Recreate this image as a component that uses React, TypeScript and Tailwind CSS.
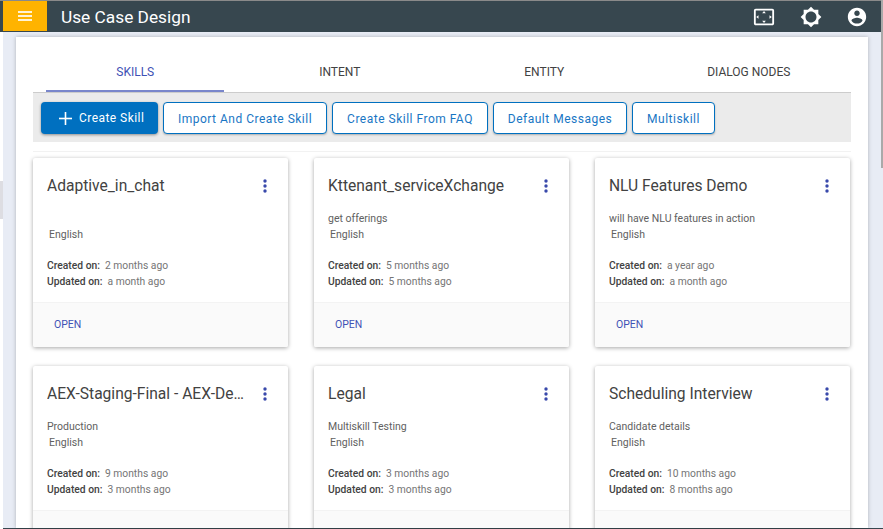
const skills = [
  { title: "Adaptive_in_chat", desc: "", created: "2 months ago", updated: "a month ago" },
  { title: "Kttenant_serviceXchange", desc: "get offerings", created: "5 months ago", updated: "5 months ago" },
  { title: "NLU Features Demo", desc: "will have NLU features in action", created: "a year ago", updated: "a month ago" },
  { title: "AEX-Staging-Final - AEX-Demo-Bot", desc: "Production", created: "9 months ago", updated: "3 months ago" },
  { title: "Legal", desc: "Multiskill Testing", created: "3 months ago", updated: "3 months ago" },
  { title: "Scheduling Interview", desc: "Candidate details", created: "10 months ago", updated: "8 months ago" },
];

const tabs = ["SKILLS", "INTENT", "ENTITY", "DIALOG NODES"];
const actions = [
  { label: "Import And Create Skill", w: "w-[164px]" },
  { label: "Create Skill From FAQ", w: "w-[156px]" },
  { label: "Default Messages", w: "w-[134px]" },
  { label: "Multiskill", w: "w-[83px]" },
];

function Icon({ d, className }: { d: string; className?: string }) {
  return (
    <svg viewBox="0 0 24 24" fill="currentColor" className={className}>
      <path d={d} />
    </svg>
  );
}

function Card({ s }: { s: (typeof skills)[number] }) {
  return (
    <div className="flex h-[189px] w-[255px] shrink-0 flex-col rounded-[2px] bg-white shadow-[0_1px_4px_rgba(0,0,0,0.35)]">
      <div className="flex-1 pl-[14px] pr-[14px]">
        <div className="flex h-[53px] items-center justify-between pt-[3px]">
          <div className="w-[198px] truncate text-[15.6px] leading-[20px] text-[#424242]">{s.title}</div>
          <svg viewBox="0 0 4 14" className="mr-[7px] h-[14px] w-[4px] fill-[#3949ab]">
            <circle cx="2" cy="2" r="1.7" />
            <circle cx="2" cy="7" r="1.7" />
            <circle cx="2" cy="12" r="1.7" />
          </svg>
        </div>
        <div className="h-[16px] text-[10.5px] leading-[16px] text-[#616161]">{s.desc}</div>
        <div className="h-[16px] pl-[2px] text-[10.5px] leading-[16px] text-[#616161]">English</div>
        <div className="mt-[15px] text-[10.3px] leading-[16px] text-[#757575]">
          <div><span className="mr-[5px] font-medium text-[#424242]">Created on:</span>{s.created}</div>
          <div><span className="mr-[5px] font-medium text-[#424242]">Updated on:</span>{s.updated}</div>
        </div>
      </div>
      <div className="flex h-[45px] items-center rounded-b-[2px] border-t border-[#f3f3f3] bg-[#fafafa] pl-[21px] text-[10.5px] text-[#3f51b5]">
        OPEN
      </div>
    </div>
  );
}

export default function App() {
  return (
    <div className="relative flex h-[529px] w-[883px] flex-col overflow-hidden bg-[#e8ecf5] font-['Roboto',sans-serif]">
      <div className="h-px shrink-0 bg-[#8a8a8a]" />
      <header className="flex h-[31px] shrink-0 items-center bg-[#37474f] pl-[3px] text-white">
        <button className="flex h-[30px] w-[44px] items-center justify-center self-start bg-[#ffb300]">
          <svg viewBox="0 0 14 10" className="h-[10px] w-[14px] fill-[#fff3d6]">
            <rect y="0" width="14" height="2" />
            <rect y="4" width="14" height="2" />
            <rect y="8" width="14" height="2" />
          </svg>
        </button>
        <div className="ml-[14px] pt-px text-[17.3px] leading-[22px]">Use Case Design</div>
        <div className="ml-auto mr-[15px] flex items-center gap-[24.5px]">
          <Icon className="h-[22px] w-[22px]" d="M12.01 5.5L10 8h4l-1.99-2.5zM18 10v4l2.5-1.99L18 10zM6 10l-2.5 2.01L6 14v-4zm8 6h-4l2.01 2.5L14 16zm7-13H3c-1.1 0-2 .9-2 2v14c0 1.1.9 2 2 2h18c1.1 0 2-.9 2-2V5c0-1.1-.9-2-2-2zm0 16.01H3V4.99h18v14.02z" />
          <Icon className="h-[22px] w-[22px]" d="M20 8.69V4h-4.69L12 .69 8.69 4H4v4.69L.69 12 4 15.31V20h4.69L12 23.31 15.31 20H20v-4.69L23.31 12 20 8.69zM12 18c-3.31 0-6-2.69-6-6s2.69-6 6-6 6 2.69 6 6-2.69 6-6 6z" />
          <Icon className="h-[22px] w-[22px]" d="M12 2C6.48 2 2 6.48 2 12s4.48 10 10 10 10-4.48 10-10S17.52 2 12 2zm0 3c1.66 0 3 1.34 3 3s-1.34 3-3 3-3-1.34-3-3 1.34-3 3-3zm0 14.2c-2.5 0-4.71-1.28-6-3.22.03-1.99 4-3.08 6-3.08 1.99 0 5.97 1.09 6 3.08-1.29 1.94-3.5 3.22-6 3.22z" />
        </div>
      </header>
      <div className="flex min-h-0 flex-1 border-b border-[#37474f] pl-[3px] pt-[5px]">
        <main className="ml-[13px] w-[852px] overflow-hidden bg-white px-[17px] shadow-[0_0_4px_rgba(0,0,0,0.25)]">
          <nav className="flex h-[56px] border-b border-[#cccccc]">
            {tabs.map((t, i) => (
              <div key={t} className={`relative flex w-[204.5px] items-center justify-center pt-[14px] text-[12px] ${i === 0 ? "text-[#3f51b5]" : "text-[#424242]"}`}>
                {t}
                {i === 0 && <div className="absolute right-[13.5px] bottom-0 left-[13px] h-[2px] bg-[#7986cb]" />}
              </div>
            ))}
          </nav>
          <div className="flex h-[49px] items-start gap-[5px] bg-[#ebebeb] pl-[8px] pt-[9px]">
            <button className="flex h-[32px] w-[117px] items-center gap-[7px] rounded-[4px] bg-[#0070c0] pl-[18px] text-[12px] tracking-[0.45px] text-white shadow-[0_1px_3px_rgba(0,0,0,0.4)]">
              <svg viewBox="0 0 13 13" className="h-[13px] w-[13px] fill-white">
                <rect x="5.7" width="1.6" height="13" />
                <rect y="5.7" width="13" height="1.6" />
              </svg>
              Create Skill
            </button>
            {actions.map((a) => (
              <button key={a.label} className={`h-[32px] ${a.w} rounded-[4px] border border-[#0070c0] bg-white pt-px text-[12px] tracking-[0.5px] text-[#1976c4] shadow-[0_1px_2px_rgba(0,0,0,0.25)]`}>
                {a.label}
              </button>
            ))}
          </div>
          <div className="mt-[9px] h-[1px] bg-[#f2f2f2]" />
          <div className="mt-[6px] grid grid-cols-[255px_255px_256px] gap-x-[26px] gap-y-[19px]">
            {skills.map((s) => (
              <Card key={s.title} s={s} />
            ))}
          </div>
        </main>
      </div>
      <div className="absolute top-0 right-0 h-[168px] w-[2px] bg-[#a9a9a9]" />
      <div className="absolute top-[181px] left-0 h-[38px] w-[3px] bg-[#dddde2]" />
      <div className="absolute top-[32px] left-0 h-[149px] w-[3px] bg-white" />
      <div className="absolute top-[219px] left-0 h-[310px] w-[3px] bg-white" />
    </div>
  );
}
